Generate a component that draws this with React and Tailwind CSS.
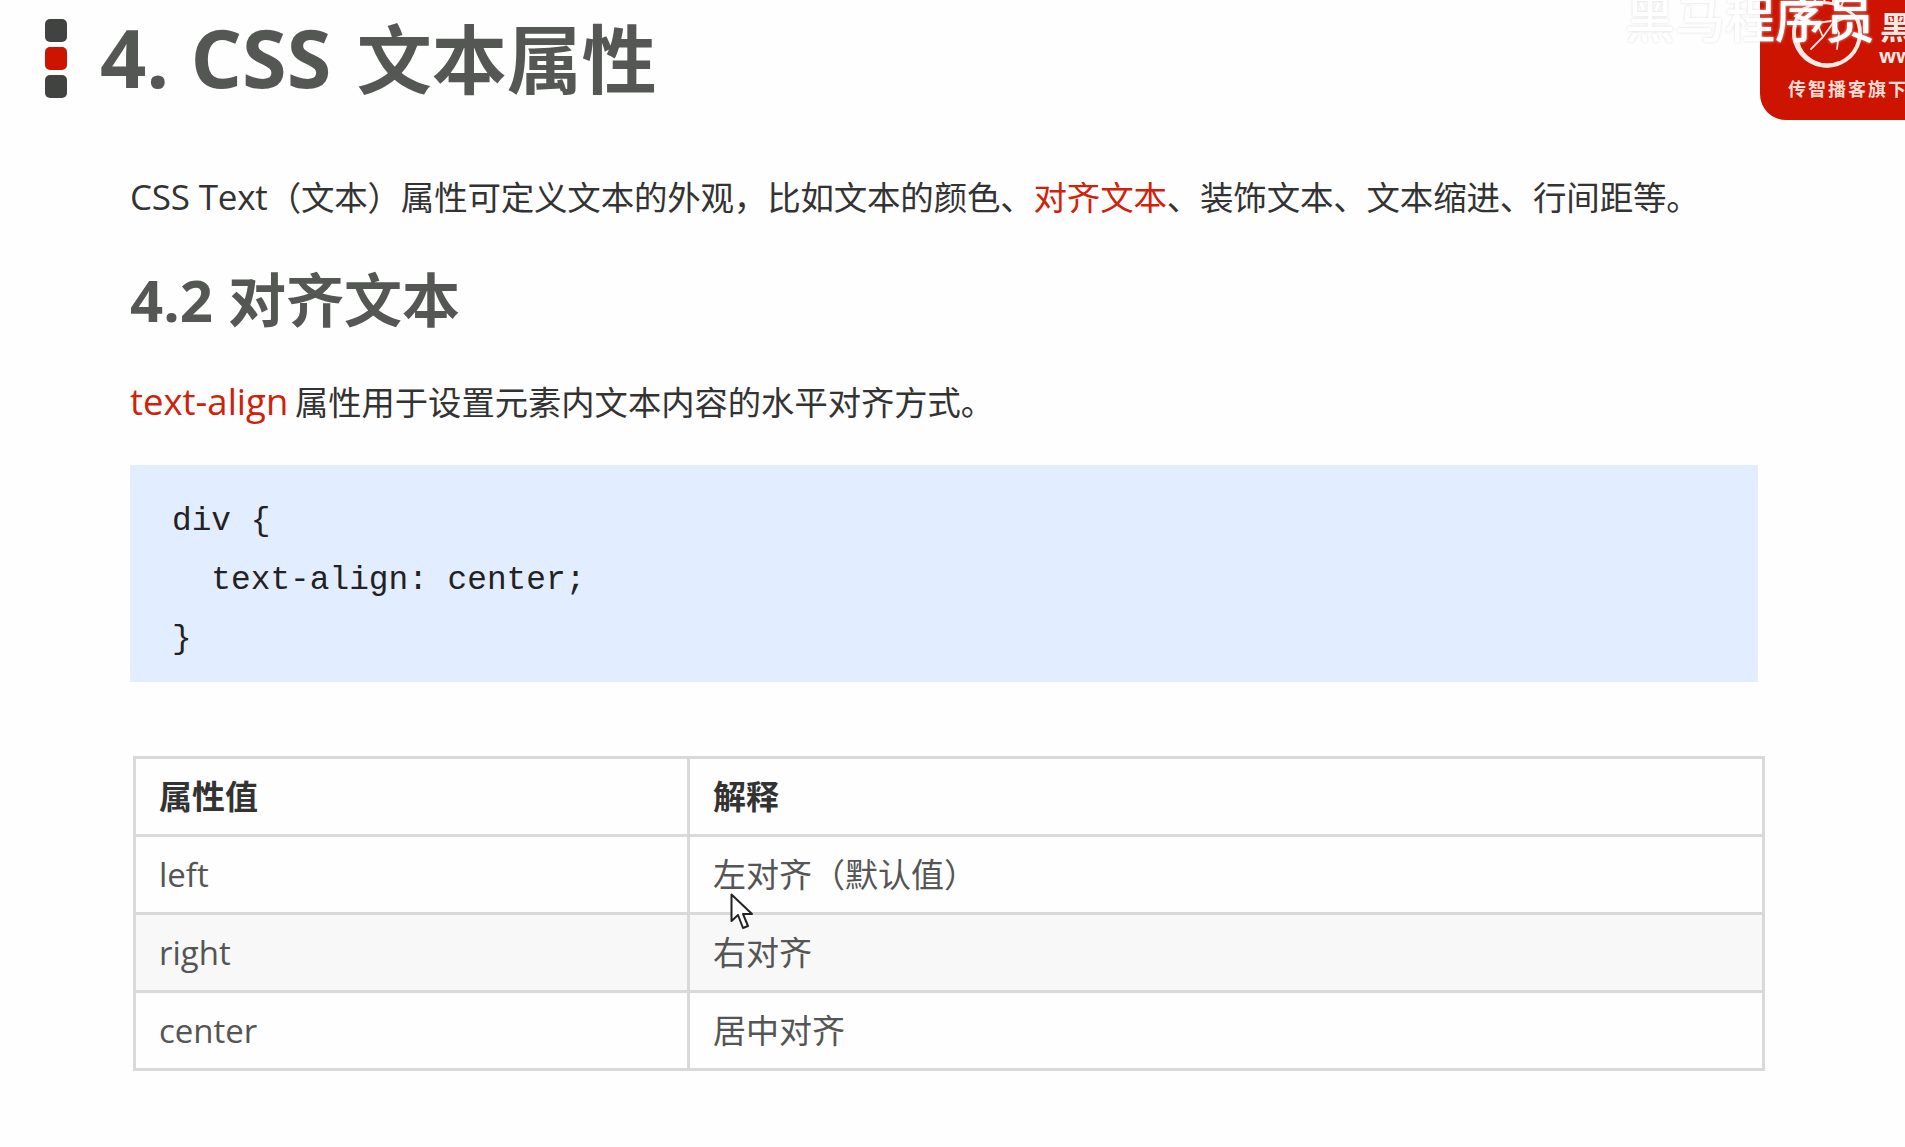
const font = "font-['Open_Sans','Noto_Sans_CJK_SC',sans-serif]";

const rows = [
  { value: "left", desc: "左对齐（默认值）" },
  { value: "right", desc: "右对齐", striped: true },
  { value: "center", desc: "居中对齐" },
];

function Bullets() {
  return (
    <div className="flex flex-col gap-[5px] w-[22px] shrink-0">
      <span className="h-[23px] rounded-[5px] bg-[#414341]" />
      <span className="h-[23px] rounded-[5px] bg-[#cc1400]" />
      <span className="h-[23px] rounded-[5px] bg-[#414341]" />
    </div>
  );
}

function Logo() {
  return (
    <div className="absolute top-0 right-0 w-[145px] h-[120px] bg-[#cc1400] rounded-bl-[26px] overflow-hidden">
      <svg className="absolute left-[27px] top-[-7px]" width="80" height="80" viewBox="0 0 80 80" fill="none" stroke="#fbe9e4" strokeLinecap="round">
        {/* ring, heavier along the bottom left */}
        <path d="M69 24 A33 33 0 1 1 17 16" strokeWidth="4" />
        <path d="M10 48 A31 31 0 0 0 52 70" strokeWidth="4" />
        {/* dragon head and spikes */}
        <path d="M17 16 C30 8 42 8 54 14 C60 17 65 20 69 24" strokeWidth="3" />
        <path d="M30 11 L26 4 M38 10 L36 2 M46 11 L46 3 M54 14 L57 6" strokeWidth="2" />
        {/* runner */}
        <path d="M24 56 L36 44 L46 30 L52 40 L50 56 M36 44 L30 30 L44 28 M46 30 L56 26" strokeWidth="1.8" />
      </svg>
      <span className="absolute left-[120px] top-[11px] text-[32px] leading-none font-bold text-[#fbe9e4] whitespace-nowrap">黑马</span>
      <span className="absolute left-[119px] top-[46px] text-[20px] leading-none font-bold text-[#fbe9e4]">www</span>
      <span className="absolute left-[28px] top-[80px] text-[18px] leading-[18px] font-bold text-[#fbdcd4] tracking-[2px] whitespace-nowrap">传智播客旗下</span>
    </div>
  );
}

function Cursor() {
  return (
    <svg className="absolute left-[730px] top-[893px]" width="24" height="38" viewBox="0 0 24 38">
      <path d="M1.5 1.5 V28 L8 22 L13 35 L18 33 L13 21 H22 Z" fill="#fff" stroke="#222" strokeWidth="2" strokeLinejoin="round" />
    </svg>
  );
}

export default function App() {
  return (
    <div className={`relative min-h-[1147px] overflow-hidden bg-[#fefefe] ${font}`}>
      <Logo />
      <span className="absolute left-[1625px] top-[-11px] text-[50px] leading-[60px] font-medium text-white whitespace-nowrap [text-shadow:0_0_3px_#ddd]">
        黑马程序员
      </span>

      <header className="flex items-start gap-[33px] pl-[45px] pt-[19px]">
        <Bullets />
        <h1 className="-mt-[2px] h-[79px] text-[75px] leading-[80px] font-bold text-[#555755] whitespace-nowrap">
          <span className="text-[81px]">4. CSS</span> <span className="ml-[6px]">文本属性</span>
        </h1>
      </header>

      <main className="pl-[130px] pt-[76px] text-[#333]">
        <p className="text-[33.5px] leading-[46px] tracking-[-0.2px] whitespace-nowrap">
          <span className="text-[35px]">CSS Text</span>（文本）属性可定义文本的外观，比如文本的颜色、<span className="text-[#d0210a]">对齐文本</span>、装饰文本、文本缩进、行间距等。
        </p>
        <h2 className="mt-[41px] text-[58px] leading-[78px] font-bold text-[#555755] whitespace-nowrap">4.2 对齐文本</h2>
        <p className="mt-[39px] text-[33.3px] leading-[46px] whitespace-nowrap">
          <span className="text-[36.5px] text-[#d0210a]">text-align</span> <span className="-ml-[2px]">属性用于设置元素内文本内容的水平对齐方式。</span>
        </p>

        <pre className="mt-[40px] w-[1628px] h-[217px] bg-[#e2edff] pl-[42px] pt-[27px] font-['Liberation_Mono',monospace] text-[32.8px] leading-[59px] text-[#222]">
{`div {
  text-align: center;
}`}
        </pre>

        <table className="mt-[74px] ml-[3px] w-[1632px] border-collapse border-[3px] border-[#d8d9d8] table-fixed text-[33px] text-[#555]">
          <colgroup>
            <col className="w-[554px]" />
            <col />
          </colgroup>
          <thead>
            <tr className="h-[78px]">
              <th className="border-[3px] border-[#d8d9d8] pl-[23px] text-left font-bold text-[#333]">属性值</th>
              <th className="border-[3px] border-[#d8d9d8] pl-[23px] text-left font-bold text-[#333]">解释</th>
            </tr>
          </thead>
          <tbody>
            {rows.map((row) => (
              <tr key={row.value} className={`h-[78px] ${row.striped ? "bg-[#f7f8f7]" : ""}`}>
                <td className="border-[3px] border-[#d8d9d8] pl-[23px]">{row.value}</td>
                <td className="border-[3px] border-[#d8d9d8] pl-[23px]">{row.desc}</td>
              </tr>
            ))}
          </tbody>
        </table>
      </main>
      <Cursor />
    </div>
  );
}
